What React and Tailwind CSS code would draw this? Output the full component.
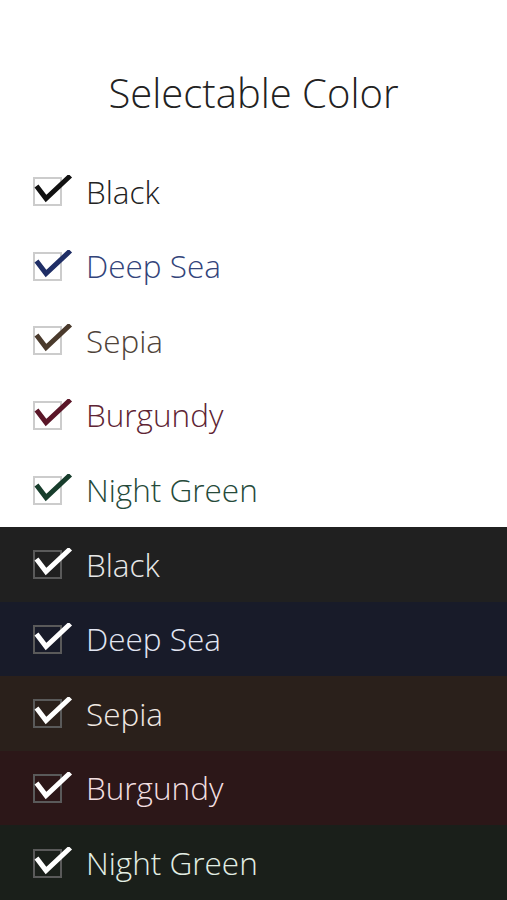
const lightRows = [
  { name: 'Black', text: 'text-[#222222]', check: '#111111' },
  { name: 'Deep Sea', text: 'text-[#33447a]', check: '#1f2e66' },
  { name: 'Sepia', text: 'text-[#4f4339]', check: '#4a3a2c' },
  { name: 'Burgundy', text: 'text-[#5e2434]', check: '#5a1628' },
  { name: 'Night Green', text: 'text-[#264a3a]', check: '#173d2c' },
];

const darkRows = [
  { name: 'Black', bg: 'bg-[#202020]', text: 'text-[#e8e8e8]' },
  { name: 'Deep Sea', bg: 'bg-[#181b29]', text: 'text-[#e2e6f2]' },
  { name: 'Sepia', bg: 'bg-[#2a201b]', text: 'text-[#f0e8e2]' },
  { name: 'Burgundy', bg: 'bg-[#2c1718]', text: 'text-[#f2dfe0]' },
  { name: 'Night Green', bg: 'bg-[#1a1f1a]', text: 'text-[#e2eee4]' },
];

function CheckIcon({ box, check }) {
  return (
    <svg width="40" height="32" viewBox="0 0 40 32" className="shrink-0">
      <rect x="1" y="3" width="27" height="27" fill="none" stroke={box} strokeWidth="2" />
      <path d="M5 13 L13 23.5 L35.5 2.5" fill="none" stroke={check} strokeWidth="5" strokeLinecap="square" strokeLinejoin="miter" />
    </svg>
  );
}

function Row({ name, textClass, box, check, bg = '' }) {
  return (
    <div className={`flex items-center h-[74.6px] pl-[33px] ${bg}`}>
      <CheckIcon box={box} check={check} />
      <span className={`ml-[13px] text-[31.5px] font-light leading-none ${textClass}`}>{name}</span>
    </div>
  );
}

export default function App() {
  return (
    <div className="w-[507px] h-[900px] bg-white overflow-hidden" style={{ fontFamily: '"Open Sans", sans-serif' }}>
      <div className="h-[154px] flex justify-center pt-[73px]">
        <h1 className="text-[40px] font-light text-[#222222] leading-none">Selectable Color</h1>
      </div>
      {lightRows.map((r) => (
        <Row key={r.name} name={r.name} textClass={r.text} box="#cccccc" check={r.check} />
      ))}
      {darkRows.map((r) => (
        <Row key={'d' + r.name} name={r.name} textClass={r.text} box="#5a5a5a" check="#ffffff" bg={r.bg} />
      ))}
    </div>
  );
}
